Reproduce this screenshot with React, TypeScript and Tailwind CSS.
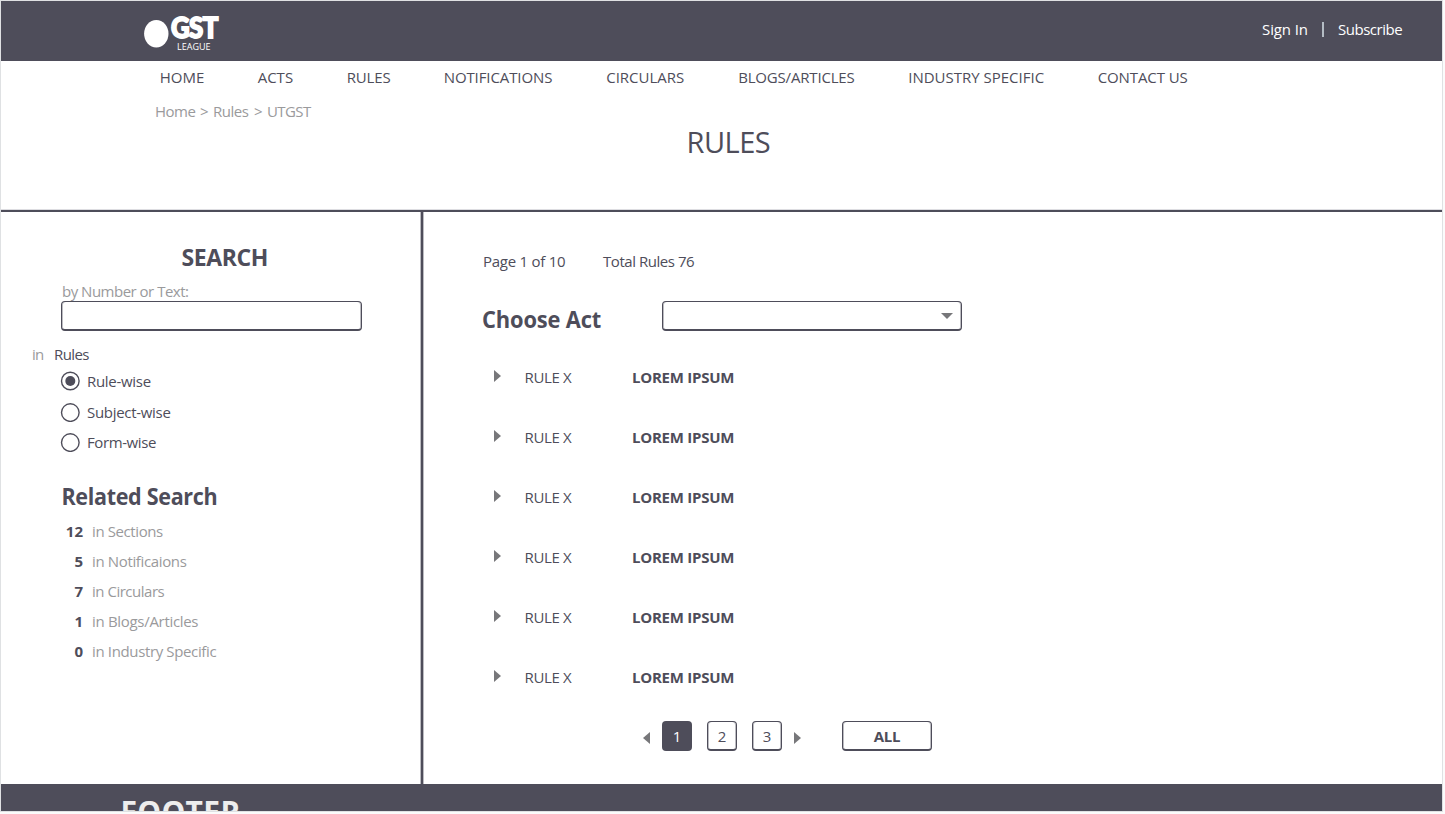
import React, { useState } from "react";

const navItems = [
  { label: "HOME", cls: "w-[44px]" },
  { label: "ACTS", cls: "w-[35px]" },
  { label: "RULES", cls: "w-[43px] tracking-[-0.15px]" },
  { label: "NOTIFICATIONS", cls: "w-[108.5px] tracking-[-0.1px]" },
  { label: "CIRCULARS", cls: "w-[78px]" },
  { label: "BLOGS/ARTICLES", cls: "w-[116px] tracking-[-0.18px]" },
  { label: "INDUSTRY SPECIFIC", cls: "w-[135.5px]" },
  { label: "CONTACT US", cls: "w-[90px] tracking-[-0.1px]" },
];

const modes = [
  { label: "Rule-wise", cls: "tracking-[-0.3px]", row: "h-[30.5px]" },
  { label: "Subject-wise", cls: "tracking-[-0.3px]", row: "h-[30px]" },
  { label: "Form-wise", cls: "tracking-[-0.4px]", row: "h-[30px]" },
];

const related = [
  { count: 12, label: "in Sections", cls: "tracking-[-0.4px]" },
  { count: 5, label: "in Notificaions", cls: "tracking-[-0.36px]" },
  { count: 7, label: "in Circulars", cls: "tracking-[-0.48px]" },
  { count: 1, label: "in Blogs/Articles", cls: "tracking-[-0.31px]" },
  { count: 0, label: "in Industry Specific", cls: "tracking-[-0.36px]" },
];

const rules = [1, 2, 3, 4, 5, 6];

const box =
  "rounded-[4px] border border-b-2 border-[#4e4d5a] shadow-[inset_1px_0_0_#4e4d5a60,inset_-1px_0_0_#4e4d5a60]";

function Triangle({ points, w, h }: { points: string; w: number; h: number }) {
  return (
    <svg width={w} height={h} viewBox={`0 0 ${w} ${h}`} className="block shrink-0 fill-[#77777a]">
      <polygon points={points} />
    </svg>
  );
}

function Radio({ checked }: { checked: boolean }) {
  return (
    <svg width="20" height="20" viewBox="0 0 20 20" className="block shrink-0">
      <circle cx="10.3" cy={checked ? 10 : 10.6} r="8.8" fill="none" stroke="#4e4d5a" strokeWidth="1.4" />
      {checked && <circle cx="10.3" cy="10" r="5" fill="#4e4d5a" />}
    </svg>
  );
}

export default function App() {
  const [mode, setMode] = useState(0);
  return (
    <div className="h-[814px] w-[1445px] overflow-hidden bg-[#fbfbfb] font-['Open_Sans',sans-serif] text-[15px] leading-[20px] text-[#4e4d5a]">
      <div className="flex h-[812px] w-[1443px] flex-col overflow-hidden border border-[#dfe1e3] bg-white whitespace-nowrap">
        <header className="flex h-[60px] shrink-0 justify-between bg-[#4e4d5a] text-white">
          <div className="flex pl-[143px] pt-[14px]">
            <svg width="25" height="28" viewBox="0 0 25 28" className="mt-[5px] block">
              <ellipse cx="12.3" cy="13.7" rx="12.2" ry="13.7" fill="#fff" />
            </svg>
            <div className="ml-[2px] w-[50px]">
              <div className="h-[25px] origin-left scale-x-[0.92] font-['Lato',sans-serif] text-[28px] leading-[25px] font-black tracking-[-0.6px] [-webkit-text-stroke:1.8px_white]">GST</div>
              <div className="pt-[1px] pl-[6px] text-[9px] leading-[12px]">LEAGUE</div>
            </div>
          </div>
          <div className="flex pr-[40px] pt-[18px]">
            <a className="w-[47px] tracking-[-0.1px]">Sign In</a>
            <span className="mr-[14px] ml-[13px] mt-[3px] h-[15px] w-[2px] bg-[#b4bcc4]" />
            <a className="w-[64px] tracking-[-0.48px]">Subscribe</a>
          </div>
        </header>

        <nav className="flex h-[33px] shrink-0 gap-[54px] pt-[6px] pl-[158.7px]">
          {navItems.map((n) => (
            <a key={n.label} className={n.cls}>{n.label}</a>
          ))}
        </nav>

        <div className="h-[118px] shrink-0 border-b-2 border-[#4e4d5a] shadow-[inset_0_-1px_0_#dddde1]">
          <div className="flex h-[28px] pt-[7px] pl-[154px] text-[#9a9a9c]">
            <span className="w-[45px] tracking-[-0.5px]">Home</span>
            <span className="w-[13px]">&gt;</span>
            <span className="w-[41px] tracking-[-0.5px]">Rules</span>
            <span className="w-[13px]">&gt;</span>
            <span className="tracking-[-0.6px]">UTGST</span>
          </div>
          <h1 className="pl-[685.5px] text-[29px] leading-[40px] tracking-[-0.5px]">RULES</h1>
        </div>

        <main className="flex h-[572px] shrink-0">
          <aside className="w-[422px] shrink-0 border-r-2 border-[#4e4d5a] shadow-[1px_0_0_#4e4d5a60,inset_-1px_0_0_#4e4d5a60]">
            <h2 className="pt-[30px] pl-[180.5px] text-[23px] leading-[30px] font-bold tracking-[-0.4px]">SEARCH</h2>
            <div className="pt-[9px] pl-[60px]">
              <label className="block pl-[1px] tracking-[-0.5px] text-[#9a9a9c]">by Number or Text:</label>
              <input className={"block h-[30px] w-[301px] px-2 outline-none " + box} />
            </div>
            <div className="flex pt-[13px] pl-[31px]">
              <span className="w-[22px] tracking-[-0.8px] text-[#9a9a9c]">in</span>
              <span className="tracking-[-0.6px]">Rules</span>
            </div>
            <div className="pt-[2px] pl-[59px]">
              {modes.map((m, i) => (
                <div key={m.label} className={"flex items-center gap-[7px] " + m.row} onClick={() => setMode(i)}>
                  <Radio checked={mode === i} />
                  <span className={m.cls}>{m.label}</span>
                </div>
              ))}
            </div>
            <h2 className="origin-left scale-x-[0.937] pt-[24.5px] pl-[64.5px] text-[23px] leading-[30px] font-bold tracking-[-0.35px]">Related Search</h2>
            <div className="pt-[5px]">
              {related.map((r) => (
                <div key={r.label} className="flex h-[30px] items-center gap-[9px]">
                  <b className="w-[82px] text-right">{r.count}</b>
                  <span className={"text-[#9a9a9c] " + r.cls}>{r.label}</span>
                </div>
              ))}
            </div>
          </aside>

          <section className="flex-1">
            <div className="flex pt-[39px] pl-[60px]">
              <span className="w-[120px] tracking-[-0.25px]">Page 1 of 10</span>
              <span className="tracking-[-0.45px]">Total Rules 76</span>
            </div>
            <div className="flex pt-[30px] pl-[59px]">
              <h2 className="w-[180px] origin-left scale-x-[0.95] pt-[3px] text-[23px] leading-[30px] font-bold tracking-[-0.15px]">Choose Act</h2>
              <div className={"flex h-[30px] w-[300px] items-center justify-end pr-[8px] " + box}>
                <Triangle w={12} h={6} points="0,0 12,0 6,6" />
              </div>
            </div>
            <div className="pt-[13px] pl-[71px]">
              {rules.map((r) => (
                <div key={r} className="flex h-[60px] items-start pt-[20px]">
                  <div className="w-[30.5px] pt-[3px]">
                    <Triangle w={7} h={12} points="0,0 7,6 0,12" />
                  </div>
                  <span className="w-[107.5px] tracking-[-0.35px]">RULE X</span>
                  <b className="tracking-[-0.25px]">LOREM IPSUM</b>
                </div>
              ))}
            </div>
            <div className="flex items-center pt-[14px] pl-[220px]">
              <div className="pt-[4px]">
                <Triangle w={7} h={12} points="7,0 0,6 7,12" />
              </div>
              <button className="ml-[12px] h-[30px] w-[30px] rounded-[4px] bg-[#4e4d5a] text-white">1</button>
              <button className={"ml-[15px] h-[30px] w-[30px] " + box}>2</button>
              <button className={"ml-[15px] h-[30px] w-[30px] " + box}>3</button>
              <div className="ml-[12px] pt-[4px]">
                <Triangle w={7} h={12} points="0,0 7,6 0,12" />
              </div>
              <button className={"ml-[41px] h-[30px] w-[90px] font-bold tracking-[-0.2px] " + box}>ALL</button>
            </div>
          </section>
        </main>

        <footer className="h-[27px] shrink-0 overflow-hidden bg-[#4e4d5a] pt-[7.5px] pl-[119.5px] text-[30px] leading-[40px] font-bold tracking-[0.3px] text-[#ededed]">FOOTER</footer>
      </div>
    </div>
  );
}
